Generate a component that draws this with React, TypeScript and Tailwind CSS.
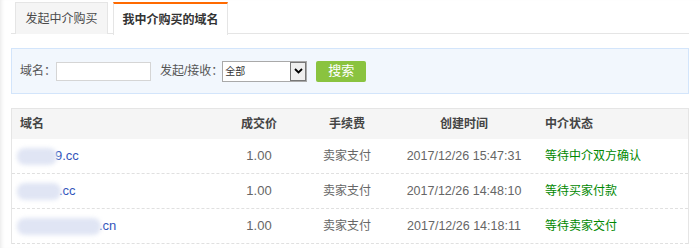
const rows = [
  { blob: 40, tail: "9.cc", time: "2017/12/26 15:47:31", status: "等待中介双方确认" },
  { blob: 44, tail: ".cc", time: "2017/12/26 14:48:10", status: "等待买家付款" },
  { blob: 84, tail: ".cn", time: "2017/12/26 14:18:11", status: "等待卖家交付" },
];

export default function App() {
  return (
    <div
      className="w-[700px] h-[248px] bg-white text-[12px] text-[#555] overflow-hidden shadow-[inset_4px_0_4px_-3px_#e6e6e6]"
      style={{ fontFamily: '"Liberation Sans", "Noto Sans CJK SC", sans-serif' }}
    >
      {/* Tabs */}
      <div className="px-[11px] pt-[2px]">
        <div className="flex border-b border-[#e5e5e5] pl-[4px] h-[32px]">
          <div className="w-[93px] h-[32px] flex items-center justify-center bg-[#f5f5f5] border border-[#e5e5e5] border-b-0 text-[#4a4a4a]">
            发起中介购买
          </div>
          <div className="ml-[5px] w-[115px] h-[33px] flex items-center justify-center bg-white border-x border-[#e5e5e5] border-t-[2px] border-t-[#ff6a00] font-bold text-[#333]">
            我中介购买的域名
          </div>
        </div>
      </div>

      {/* Search bar */}
      <div className="mx-[11px] mt-[14px] h-[46px] bg-[#f2f7fd] border border-[#d3e5fb] flex items-center pl-[8px]">
        <span className="text-[#555]">域名：</span>
        <div className="w-[95px] h-[19px] bg-white border border-[#d5d5d5]" />
        <span className="ml-[9px] text-[#555]">发起/接收：</span>
        <div className="-ml-[1px] w-[85px] h-[21px] bg-white border border-[#a9a9a9] flex items-center justify-between">
          <span className="pl-[2px] text-[10px] text-[#333]">全部</span>
          <div className="w-[16px] h-[19px] border border-[#777] bg-[#efefef] flex items-center justify-center">
            <svg width="9" height="6" viewBox="0 0 9 6">
              <path d="M1 1 L4.5 4.5 L8 1" stroke="#000" strokeWidth="1.8" fill="none" />
            </svg>
          </div>
        </div>
        <button className="ml-[9px] w-[50px] h-[21px] rounded-[2px] bg-[#8ac33f] text-white text-[13px] flex items-center justify-center">
          搜索
        </button>
      </div>

      {/* Table */}
      <div className="mx-[11px] mt-[14px] border-x border-t border-[#e5e5e5]">
        <div className="flex h-[30px] items-center bg-[#f5f5f5] font-bold text-[#444]">
          <div className="w-[199px] pl-[8px]">域名</div>
          <div className="w-[96px] text-center">成交价</div>
          <div className="w-[80px] text-center">手续费</div>
          <div className="w-[154px] text-center">创建时间</div>
          <div className="flex-1 pl-[4px]">中介状态</div>
        </div>
        {rows.map((r) => (
          <div key={r.time} className="flex h-[35px] items-center border-b border-dashed border-[#e0e0e0] text-[#666]">
            <div className="w-[199px] pl-[5px] flex items-center">
              <span
                className="inline-block h-[17px] rounded-[8px] bg-[#e0e5f4] blur-[2px]"
                style={{ width: r.blob }}
              />
              <span className="text-[#3355bb] text-[13px] -ml-[2px]">{r.tail}</span>
            </div>
            <div className="w-[96px] text-center text-[13px]">1.00</div>
            <div className="w-[80px] text-center">卖家支付</div>
            <div className="w-[154px] text-center text-[12.5px]">{r.time}</div>
            <div className="flex-1 pl-[4px] text-[#008800]">{r.status}</div>
          </div>
        ))}
      </div>
    </div>
  );
}
